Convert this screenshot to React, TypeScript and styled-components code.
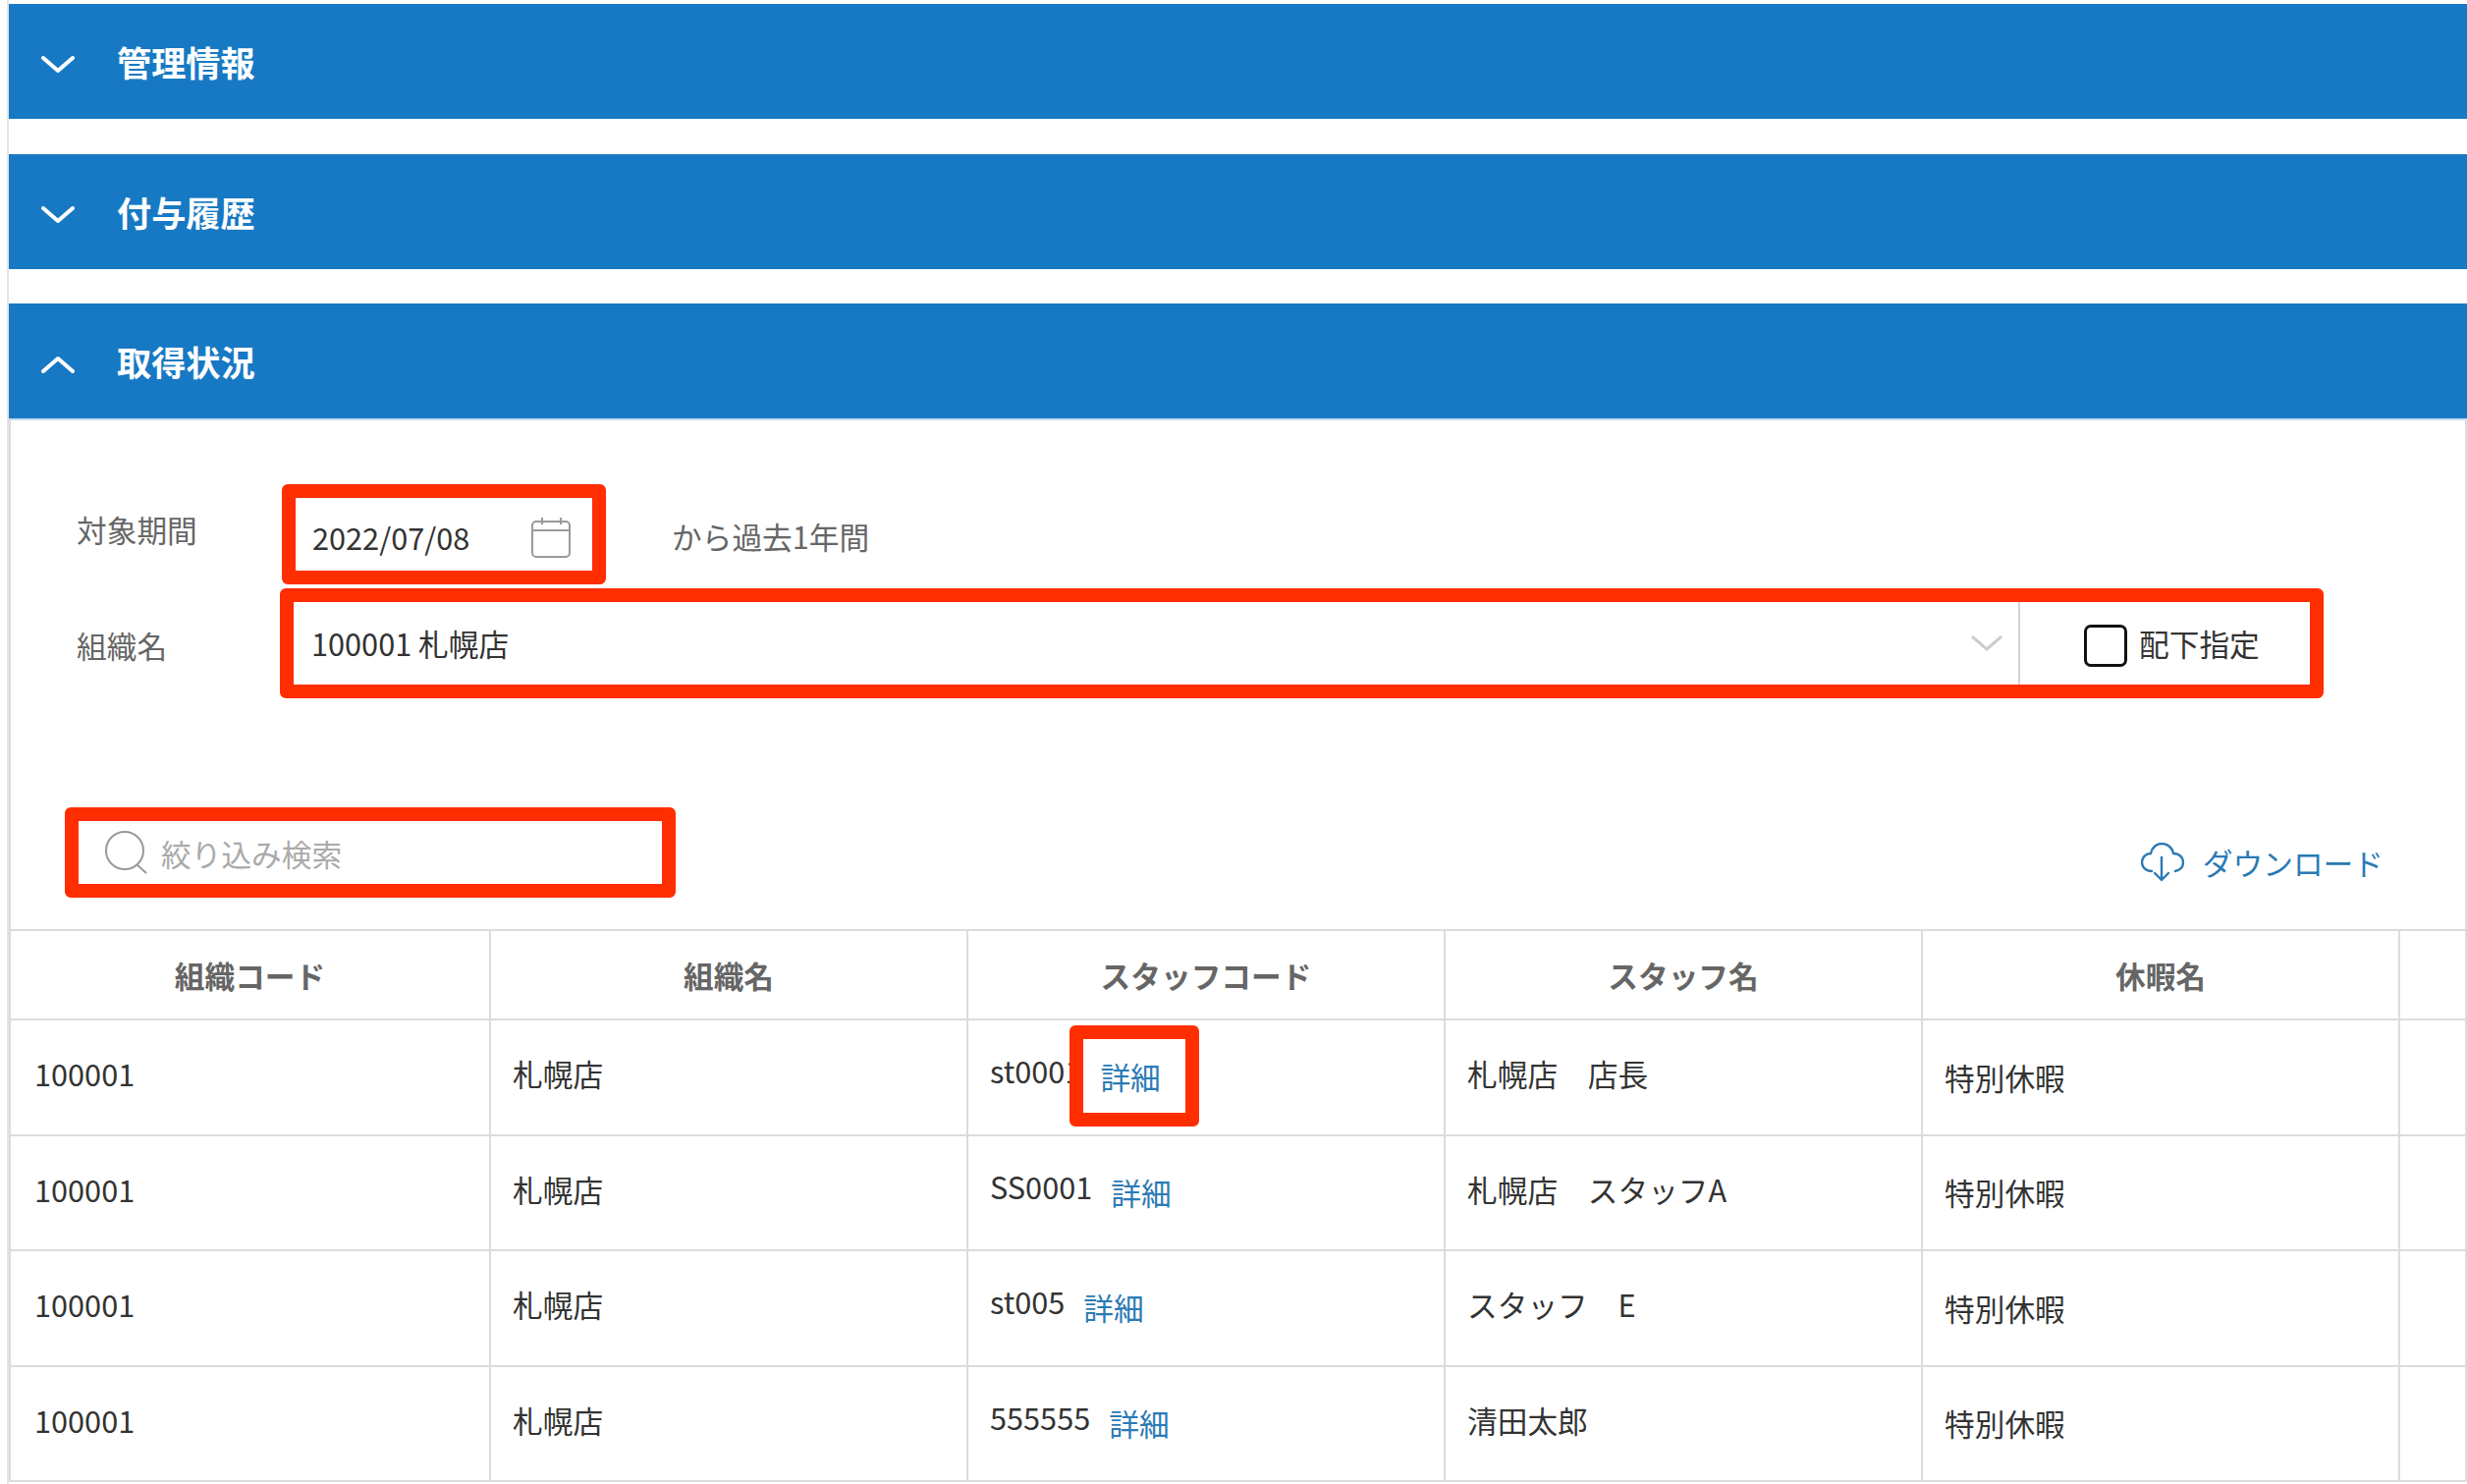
import styled, { createGlobalStyle } from 'styled-components'

const GlobalStyle = createGlobalStyle`
    html, body {
        margin: 0;
        padding: 0;
        background: #fff;
        overflow: hidden;
    }
    body {
        font-family: "Noto Sans CJK JP", "Noto Sans", sans-serif;
        font-size: 30.7px;
        color: #333;
    }
`

const rows = [
    { code: '100001', shop: '札幌店', staff: 'st0001', name: '札幌店　店長', flagged: true },
    { code: '100001', shop: '札幌店', staff: 'SS0001', name: '札幌店　スタッフA', flagged: false },
    { code: '100001', shop: '札幌店', staff: 'st005', name: 'スタッフ　E', flagged: false },
    { code: '100001', shop: '札幌店', staff: '555555', name: '清田太郎', flagged: false },
]

const columns = ['組織コード', '組織名', 'スタッフコード', 'スタッフ名', '休暇名', '']

const Chevron = ({ up }: { up?: boolean }) => (
    <BarIcon viewBox='0 0 34 18' fill='none' stroke='#fff' strokeWidth='4' strokeLinecap='round' strokeLinejoin='round'>
        <polyline points={up ? '2,16 17,3 32,16' : '2,2 17,15 32,2'} />
    </BarIcon>
)

export default function App() {
    return (
        <Page>
            <GlobalStyle />
            <Bar $after={36}>
                <Chevron />
                <BarTitle>管理情報</BarTitle>
            </Bar>
            <Bar $after={35}>
                <Chevron />
                <BarTitle>付与履歴</BarTitle>
            </Bar>
            <Bar $after={0}>
                <Chevron up />
                <BarTitle>取得状況</BarTitle>
            </Bar>
            <Panel>
                <Form>
                    <FormRow>
                        <Label $shift={-6}>対象期間</Label>
                        <DateBox>
                            <span>2022/07/08</span>
                            <CalendarIcon width='40' height='41' viewBox='0 0 40 41' fill='none' stroke='#999' strokeWidth='2'>
                                <rect x='1' y='4' width='38' height='36' rx='4' />
                                <path d='M1 13H39M11 0V7M30 0V7' />
                            </CalendarIcon>
                        </DateBox>
                        <Note>から過去1年間</Note>
                    </FormRow>
                    <FormRow>
                        <Label $shift={1}>組織名</Label>
                        <SelectBox>
                            <SelectValue>100001 札幌店</SelectValue>
                            <svg width='32' height='16' viewBox='0 0 32 16' fill='none' stroke='#ccc' strokeWidth='3'>
                                <polyline points='1,1 16,14 31,1' />
                            </svg>
                            <CheckArea>
                                <CheckBox />
                                <CheckLabel>配下指定</CheckLabel>
                            </CheckArea>
                        </SelectBox>
                    </FormRow>
                </Form>
                <Toolbar>
                    <SearchBox>
                        <svg width='45' height='44' viewBox='0 0 45 44' fill='none' stroke='#999' strokeWidth='2'>
                            <circle cx='21' cy='20' r='19' />
                            <line x1='33' y1='34' x2='43' y2='43' />
                        </svg>
                        <Placeholder>絞り込み検索</Placeholder>
                    </SearchBox>
                    <Download>
                        <svg width='44' height='40' viewBox='0 0 44 40' fill='none' stroke='#2a7ab5' strokeWidth='2.4' strokeLinecap='round' strokeLinejoin='round'>
                            <path d='M11 29C5 29 1 25 1 20C1 15 5 11 10 11C11 5 16 1 21 1C27 1 32 5 33 11C39 11 43 15 43 20C43 25 40 28 35 29' />
                            <path d='M21 15V38M14 31L21 38L28 31' />
                        </svg>
                        <span>ダウンロード</span>
                    </Download>
                </Toolbar>
                <Table>
                    <colgroup>
                        <Col $w={488} />
                        <Col $w={486} />
                        <Col $w={486} />
                        <Col $w={486} />
                        <Col $w={486} />
                        <Col $w={68} />
                    </colgroup>
                    <thead>
                        <tr>
                            {columns.map((c, i) => <Th key={i}>{c}</Th>)}
                        </tr>
                    </thead>
                    <tbody>
                        {rows.map((r, i) => (
                            <tr key={i}>
                                <Td>{r.code}</Td>
                                <Td>{r.shop}</Td>
                                <Td>
                                    {r.staff}
                                    <DetailLink $flagged={r.flagged}>詳細</DetailLink>
                                </Td>
                                <Td>{r.name}</Td>
                                <Td $low>特別休暇</Td>
                                <Td />
                            </tr>
                        ))}
                    </tbody>
                </Table>
            </Panel>
        </Page>
    )
}

const Page = styled.div`
    margin-left: 7px;
    padding-top: 4px;
    border-left: 2px solid #e4e4e8;
    height: 1507px;
`
const Bar = styled.div<{ $after: number }>`
    display: flex;
    align-items: center;
    height: 117px;
    margin-bottom: ${p => p.$after}px;
    padding-left: 33px;
    background: #1779c3;
    color: #fff;
`
const BarIcon = styled.svg`
    width: 34px;
    height: 18px;
    margin-top: 6px;
`
const BarTitle = styled.div`
    margin-left: 43px;
    font-size: 35.2px;
    font-weight: 700;
`
const Panel = styled.div`
    border-top: 2px solid #c4dcf0;
    border-left: 2px solid #dcdcdc;
    border-right: 2px solid #dcdcdc;
`
const Form = styled.div`
    display: flex;
    flex-direction: column;
    gap: 4px;
    padding: 65px 0 0 67px;
`
const FormRow = styled.div`
    display: flex;
    align-items: center;
`
const Label = styled.div<{ $shift: number }>`
    width: 209px;
    color: #666;
    transform: translateY(${p => p.$shift}px);
`
const RedFrame = styled.div`
    box-sizing: border-box;
    display: flex;
    align-items: center;
    border: 14px solid #ff2e00;
    border-radius: 6px;
    background: #fff;
`
const DateBox = styled(RedFrame)`
    justify-content: space-between;
    width: 330px;
    height: 102px;
    padding: 4px 22px 0 17px;
`
const CalendarIcon = styled.svg`
    margin-top: 3px;
`
const Note = styled.div`
    margin-left: 67px;
    padding-top: 3px;
    color: #666;
`
const SelectBox = styled(RedFrame)`
    width: 2081px;
    height: 112px;
    margin-left: -2px;
`
const SelectValue = styled.div`
    flex: 1;
    padding-left: 18px;
    padding-bottom: 1px;
`
const CheckArea = styled.div`
    display: flex;
    align-items: center;
    gap: 12px;
    align-self: stretch;
    margin-left: 16px;
    width: 297px;
    padding-left: 65px;
    box-sizing: border-box;
    border-left: 2px solid #d4d4d4;
`
const CheckBox = styled.div`
    box-sizing: border-box;
    width: 44px;
    height: 43px;
    margin-top: 5px;
    border: 3px solid #111;
    border-radius: 7px;
`
const CheckLabel = styled.span`
    padding-bottom: 2px;
`
const Toolbar = styled.div`
    display: flex;
    align-items: center;
    justify-content: space-between;
    height: 92px;
    margin-top: 111px;
    padding: 0 83px 0 55px;
`
const SearchBox = styled(RedFrame)`
    width: 622px;
    height: 92px;
    padding-left: 26px;
    gap: 13px;
`
const Placeholder = styled.span`
    color: #aaa;
`
const Download = styled.div`
    display: flex;
    align-items: center;
    gap: 19px;
    padding-top: 19px;
    color: #2a7ab5;
`
const Table = styled.table`
    width: 2500px;
    margin-top: 32px;
    border-collapse: collapse;
    table-layout: fixed;
`
const Col = styled.col<{ $w: number }>`
    width: ${p => p.$w}px;
`
const Th = styled.th`
    box-sizing: border-box;
    height: 91px;
    padding: 0;
    border: 2px solid #dcdcdc;
    border-left: 0;
    color: #666;
    font-size: 30.7px;
    font-weight: 700;
    text-align: center;
    &:last-child {
        border-right: 0;
    }
`
const Td = styled.td<{ $low?: boolean }>`
    box-sizing: border-box;
    height: 117.5px;
    padding: ${p => (p.$low ? '0 22px 1px' : '0 22px 8px')};
    border: 2px solid #dcdcdc;
    border-left: 0;
    white-space: nowrap;
    &:first-child {
        padding-left: 24px;
    }
    &:last-child {
        border-right: 0;
    }
`
const DetailLink = styled.a<{ $flagged: boolean }>`
    position: relative;
    z-index: 0;
    display: inline-block;
    margin-left: 19px;
    color: #2a7ab5;
    vertical-align: -6px;
    ${p => p.$flagged && `
        &::before {
            content: '';
            position: absolute;
            z-index: -1;
            top: -29px;
            bottom: -29px;
            left: -31px;
            right: -39px;
            border: 14px solid #ff2e00;
            border-radius: 6px;
            background: #fff;
        }
    `}
`
